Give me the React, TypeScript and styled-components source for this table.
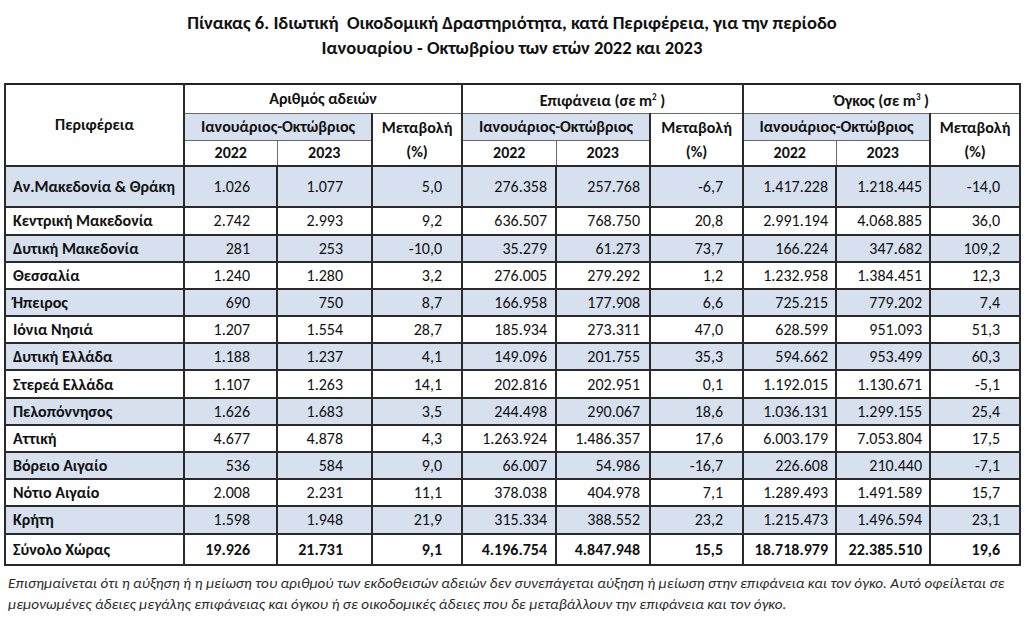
import React from 'react';
import styled, { createGlobalStyle } from 'styled-components';

const GlobalStyle = createGlobalStyle`
  html, body { margin: 0; padding: 0; background: #ffffff; }
  body { font-family: "Carlito", "Calibri", "Lato", "Noto Sans", sans-serif; color: #111111; }
`;

const Page = styled.div`
  width: 1024px;
  height: 619px;
  overflow: hidden;
  display: flex;
  flex-direction: column;
`;

const Title = styled.h1`
  margin: 10px 0 0;
  font-size: 18.6px;
  font-weight: 700;
  line-height: 25px;
  text-align: center;
  white-space: pre;
  color: #111111;
`;

const Table = styled.table`
  margin: 23px 0 0 4px;
  width: 1015px;
  border-collapse: collapse;
  table-layout: fixed;
  border: 2px solid #222222;
  font-size: 16px;
`;

const HeadRow = styled.tr<{ $h: number }>`
  height: ${(p) => p.$h}px;
`;

const HeadCell = styled.th<{ $blue?: boolean }>`
  padding: 0 2px;
  font-weight: 700;
  text-align: center;
  vertical-align: middle;
  background: ${(p) => (p.$blue ? '#d6e0ef' : '#ffffff')};
  border: 1px solid #6b6b6b;
  border-left: 2px solid #2a2a2a;
  border-right: 2px solid #2a2a2a;
  white-space: nowrap;
  line-height: 24px;
`;

const SubCell = styled(HeadCell)`
  border-left: 1px solid #6b6b6b;
  border-right: 1px solid #6b6b6b;
`;

const Sup = styled.sup`
  font-size: 9px;
`;

const DataRow = styled.tr<{ $blue: boolean; $h: number; $total?: boolean }>`
  height: ${(p) => p.$h}px;
  background: ${(p) => (p.$blue ? '#d6e0ef' : '#ffffff')};
  font-weight: ${(p) => (p.$total ? 700 : 400)};
`;

const NameCell = styled.td`
  padding: 0 2px 0 7px;
  font-weight: 700;
  text-align: left;
  white-space: nowrap;
  border: 2px solid #2a2a2a;
  vertical-align: middle;
`;

const NumCell = styled.td<{ $pr: number }>`
  padding: 0 ${(p) => p.$pr}px 0 2px;
  text-align: right;
  white-space: nowrap;
  border: 2px solid #2a2a2a;
  vertical-align: middle;
`;

const Note = styled.p`
  margin: 7px 0 0 8px;
  font-size: 15.2px;
  font-style: italic;
  line-height: 21px;
  color: #2b2b2b;
  white-space: nowrap;
`;

const rows: string[][] = [
  ['Αν.Μακεδονία & Θράκη', '1.026', '1.077', '5,0', '276.358', '257.768', '-6,7', '1.417.228', '1.218.445', '-14,0'],
  ['Κεντρική Μακεδονία', '2.742', '2.993', '9,2', '636.507', '768.750', '20,8', '2.991.194', '4.068.885', '36,0'],
  ['Δυτική Μακεδονία', '281', '253', '-10,0', '35.279', '61.273', '73,7', '166.224', '347.682', '109,2'],
  ['Θεσσαλία', '1.240', '1.280', '3,2', '276.005', '279.292', '1,2', '1.232.958', '1.384.451', '12,3'],
  ['Ήπειρος', '690', '750', '8,7', '166.958', '177.908', '6,6', '725.215', '779.202', '7,4'],
  ['Ιόνια Νησιά', '1.207', '1.554', '28,7', '185.934', '273.311', '47,0', '628.599', '951.093', '51,3'],
  ['Δυτική Ελλάδα', '1.188', '1.237', '4,1', '149.096', '201.755', '35,3', '594.662', '953.499', '60,3'],
  ['Στερεά Ελλάδα', '1.107', '1.263', '14,1', '202.816', '202.951', '0,1', '1.192.015', '1.130.671', '-5,1'],
  ['Πελοπόννησος', '1.626', '1.683', '3,5', '244.498', '290.067', '18,6', '1.036.131', '1.299.155', '25,4'],
  ['Αττική', '4.677', '4.878', '4,3', '1.263.924', '1.486.357', '17,6', '6.003.179', '7.053.804', '17,5'],
  ['Βόρειο Αιγαίο', '536', '584', '9,0', '66.007', '54.986', '-16,7', '226.608', '210.440', '-7,1'],
  ['Νότιο Αιγαίο', '2.008', '2.231', '11,1', '378.038', '404.978', '7,1', '1.289.493', '1.491.589', '15,7'],
  ['Κρήτη', '1.598', '1.948', '21,9', '315.334', '388.552', '23,2', '1.215.473', '1.496.594', '23,1'],
];

const total = ['Σύνολο Χώρας', '19.926', '21.731', '9,1', '4.196.754', '4.847.948', '15,5', '18.718.979', '22.385.510', '19,6'];

const widths = [179, 93, 95, 90, 94, 94, 93, 93, 94, 90];
const padRight = [0, 26, 28, 19, 8, 9, 19, 7, 7, 19];

const groups = [
  { label: <>Αριθμός αδειών</> },
  { label: <>Επιφάνεια (σε m<Sup>2</Sup> )</> },
  { label: <>Όγκος (σε m<Sup>3</Sup> )</> },
];

function rowHeight(i: number): number {
  if (i === 0) return 41;
  return 27.2;
}

export default function App() {
  return (
    <Page>
      <GlobalStyle />
      <Title>
        {'Πίνακας 6. Ιδιωτική  Οικοδομική Δραστηριότητα, κατά Περιφέρεια, για την περίοδο\nΙανουαρίου - Οκτωβρίου των ετών 2022 και 2023'}
      </Title>
      <Table>
        <colgroup>
          {widths.map((w, i) => (
            <col key={i} style={{ width: w }} />
          ))}
        </colgroup>
        <thead>
          <HeadRow $h={28}>
            <HeadCell rowSpan={3}>Περιφέρεια</HeadCell>
            {groups.map((g, i) => (
              <HeadCell key={i} colSpan={3}>
                {g.label}
              </HeadCell>
            ))}
          </HeadRow>
          <HeadRow $h={27}>
            {groups.map((_, i) => (
              <React.Fragment key={i}>
                <SubCell colSpan={2} $blue>
                  Ιανουάριος-Οκτώβριος
                </SubCell>
                <HeadCell rowSpan={2}>
                  Μεταβολή
                  <br />
                  (%)
                </HeadCell>
              </React.Fragment>
            ))}
          </HeadRow>
          <HeadRow $h={25}>
            {groups.map((_, i) => (
              <React.Fragment key={i}>
                <SubCell>2022</SubCell>
                <SubCell>2023</SubCell>
              </React.Fragment>
            ))}
          </HeadRow>
        </thead>
        <tbody>
          {rows.map((r, i) => (
            <DataRow key={r[0]} $blue={i % 2 === 0} $h={rowHeight(i)}>
              <NameCell>{r[0]}</NameCell>
              {r.slice(1).map((v, j) => (
                <NumCell key={j} $pr={padRight[j + 1]}>
                  {v}
                </NumCell>
              ))}
            </DataRow>
          ))}
          <DataRow $blue={false} $h={31} $total>
            <NameCell>{total[0]}</NameCell>
            {total.slice(1).map((v, j) => (
              <NumCell key={j} $pr={padRight[j + 1]}>
                {v}
              </NumCell>
            ))}
          </DataRow>
        </tbody>
      </Table>
      <Note>
        Επισημαίνεται ότι η αύξηση ή η μείωση του αριθμού των εκδοθεισών αδειών δεν συνεπάγεται αύξηση ή μείωση στην επιφάνεια και τον όγκο. Αυτό οφείλεται σε
        <br />
        μεμονωμένες άδειες μεγάλης επιφάνειας και όγκου ή σε οικοδομικές άδειες που δε μεταβάλλουν την επιφάνεια και τον όγκο.
      </Note>
    </Page>
  );
}
